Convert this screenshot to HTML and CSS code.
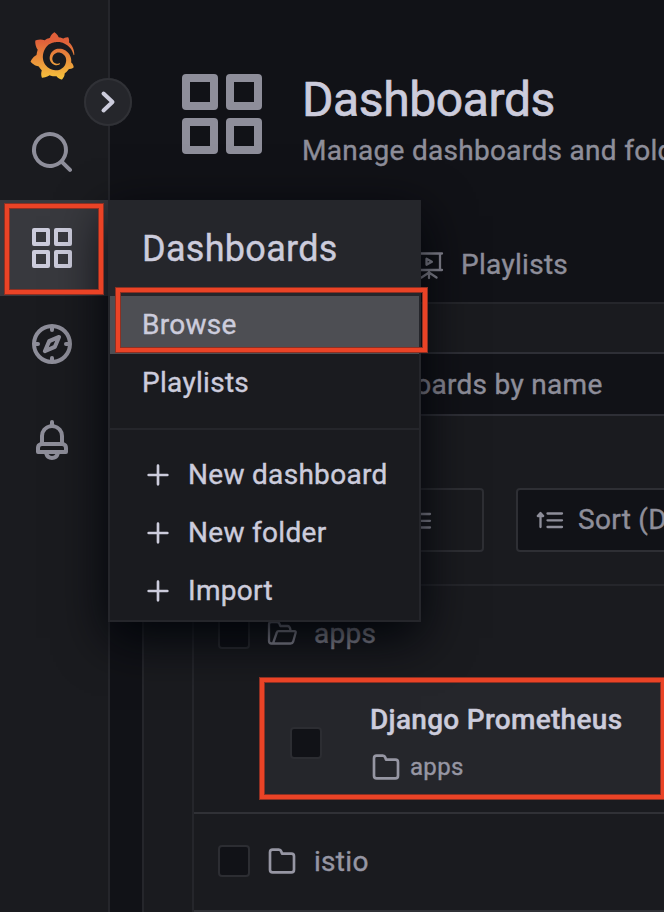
FILE: index.html
```html
<!DOCTYPE html>
<html lang="en">
<head>
<meta charset="utf-8">
<title>Dashboards</title>
<link rel="stylesheet" href="styles.css">
</head>
<body>
<svg class="defs" width="0" height="0">
  <symbol id="apps" viewBox="0 0 24 24"><path d="M10,13H3a1,1,0,0,0-1,1v7a1,1,0,0,0,1,1h7a1,1,0,0,0,1-1V14A1,1,0,0,0,10,13ZM9,20H4V15H9ZM21,2H14a1,1,0,0,0-1,1v7a1,1,0,0,0,1,1h7a1,1,0,0,0,1-1V3A1,1,0,0,0,21,2ZM20,9H15V4h5Zm1,4H14a1,1,0,0,0-1,1v7a1,1,0,0,0,1,1h7a1,1,0,0,0,1-1V14A1,1,0,0,0,21,13Zm-1,7H15V15h5ZM10,2H3A1,1,0,0,0,2,3v7a1,1,0,0,0,1,1h7a1,1,0,0,0,1-1V3A1,1,0,0,0,10,2ZM9,9H4V4H9Z"/></symbol>
  <symbol id="folder" viewBox="0 0 24 24"><path d="M19,5.5H12.72l-.32-1a3,3,0,0,0-2.84-2H5a3,3,0,0,0-3,3v13a3,3,0,0,0,3,3H19a3,3,0,0,0,3-3V8.500A3,3,0,0,0,19,5.500Zm1,13a1,1,0,0,1-1,1H5a1,1,0,0,1-1-1V5.500a1,1,0,0,1,1-1H9.560a1,1,0,0,1,.95.680l.54,1.640A1,1,0,0,0,12,7.500h7a1,1,0,0,1,1,1Z"/></symbol>
  <symbol id="plus" viewBox="0 0 24 24"><path d="M19,11H13V5a1,1,0,0,0-2,0v6H5a1,1,0,0,0,0,2h6v6a1,1,0,0,0,2,0V13h6a1,1,0,0,0,0-2Z"/></symbol>
</svg>
<div class="app">
  <nav class="sidebar">
    <a class="nav-item logo">
      <svg viewBox="6 0 340 367" width="45" height="48">
        <defs><linearGradient id="flame" gradientUnits="userSpaceOnUse" x1="175" y1="365" x2="175" y2="70"><stop offset="0" stop-color="#f5c43c"/><stop offset="1" stop-color="#e0603a"/></linearGradient></defs>
        <path fill="url(#flame)" d="M342,161.2c-0.6-6.1-1.6-13.1-3.6-20.9c-2-7.7-5-16.2-9.4-25c-4.4-8.8-10.1-17.9-17.5-26.8c-2.9-3.5-6.1-6.9-9.5-10.2c5.1-20.3-6.2-37.9-6.2-37.9c-19.5-1.2-31.9,6.1-36.5,9.4c-0.8-0.3-1.5-0.7-2.3-1c-3.3-1.3-6.7-2.6-10.3-3.7c-3.5-1.1-7.1-2.1-10.8-3c-3.7-0.9-7.4-1.6-11.2-2.2c-0.7-0.1-1.3-0.2-2-0.3c-8.5-27.2-32.9-38.6-32.9-38.6c-27.3,17.3-32.4,41.5-32.4,41.5s-0.1,0.5-0.3,1.4c-1.5,0.4-3,0.9-4.5,1.3c-2.1,0.6-4.2,1.4-6.2,2.2c-2.1,0.8-4.1,1.6-6.2,2.5c-4.1,1.8-8.2,3.8-12.2,6c-3.9,2.2-7.7,4.6-11.4,7.1c-0.5-0.2-1-0.4-1-0.4c-37.8-14.4-71.3,2.9-71.3,2.9c-3.1,40.2,15.1,65.5,18.7,70.1c-0.9,2.5-1.7,5-2.5,7.5c-2.8,9.1-4.9,18.4-6.2,28.1c-0.2,1.4-0.4,2.8-0.5,4.2C18.8,192.7,8.5,228,8.5,228c29.1,33.5,63.1,35.6,63.1,35.6c0,0,0.1-0.1,0.1-0.1c4.3,7.7,9.3,15,14.9,21.9c2.4,2.9,4.8,5.6,7.4,8.3c-10.6,30.4,1.5,55.6,1.5,55.6c32.4,1.2,53.7-14.2,58.2-17.7c3.2,1.1,6.5,2.1,9.8,2.9c10,2.6,20.2,4.1,30.4,4.5c2.5,0.1,5.1,0.2,7.6,0.1l1.2,0l0.8,0l1.6,0l1.6-0.1l0,0.1c15.3,21.8,42.1,24.9,42.1,24.9c19.1-20.1,20.2-40.1,20.2-44.4l0,0c0,0,0-0.1,0-0.3c0-0.4,0-0.6,0-0.6l0,0c0-0.3,0-0.6,0-0.9c4-2.8,7.8-5.8,11.4-9.1c7.6-6.9,14.3-14.8,19.9-23.3c0.5-0.8,1-1.6,1.5-2.4c21.6,1.2,36.9-13.4,36.9-13.4c-3.6-22.5-16.4-33.5-19.1-35.6l0,0c0,0-0.1-0.1-0.3-0.2c-0.2-0.1-0.2-0.2-0.2-0.2c0,0,0,0,0,0c-0.1-0.1-0.3-0.2-0.5-0.3c0.1-1.4,0.2-2.7,0.3-4.1c0.2-2.4,0.2-4.9,0.2-7.3l0-1.8l0-0.9l0-0.5c0-0.6,0-0.4,0-0.6l-0.1-1.5l-0.1-2c0-0.7-0.1-1.3-0.2-1.9c-0.1-0.6-0.1-1.3-0.2-1.9l-0.2-1.9l-0.3-1.9c-0.4-2.5-0.8-4.9-1.4-7.4c-2.3-9.7-6.1-18.9-11-27.2c-5-8.3-11.2-15.6-18.3-21.8c-7-6.2-14.9-11.2-23.1-14.9c-8.3-3.7-16.9-6.1-25.5-7.2c-4.3-0.6-8.6-0.8-12.9-0.7l-1.6,0l-0.4,0c-0.1,0-0.6,0-0.5,0l-0.7,0l-1.6,0.1c-0.6,0-1.2,0.1-1.7,0.1c-2.2,0.2-4.4,0.5-6.5,0.9c-8.6,1.6-16.7,4.7-23.8,9c-7.1,4.3-13.3,9.6-18.3,15.6c-5,6-8.9,12.7-11.6,19.6c-2.7,6.9-4.2,14.1-4.6,21c-0.1,1.7-0.1,3.5-0.1,5.2c0,0.4,0,0.9,0,1.3l0.1,1.4c0.1,0.8,0.1,1.7,0.2,2.5c0.3,3.5,1,6.9,1.9,10.1c1.9,6.5,4.9,12.4,8.6,17.4c3.7,5,8.2,9.1,12.9,12.4c4.7,3.2,9.8,5.5,14.8,7c5,1.5,10,2.1,14.7,2.1c0.6,0,1.2,0,1.7,0c0.3,0,0.6,0,0.9,0c0.3,0,0.6,0,0.9-0.1c0.5,0,1-0.1,1.5-0.1c0.1,0,0.3,0,0.4-0.1l0.5-0.1c0.3,0,0.6-0.1,0.9-0.1c0.6-0.1,1.1-0.2,1.7-0.3c0.6-0.1,1.1-0.2,1.6-0.4c1.1-0.2,2.1-0.6,3.1-0.9c2-0.7,4-1.5,5.7-2.4c1.8-0.9,3.4-2,5-3c0.4-0.3,0.9-0.6,1.3-1c1.6-1.3,1.9-3.7,0.6-5.3c-1.1-1.4-3.1-1.8-4.7-0.9c-0.4,0.2-0.8,0.4-1.2,0.6c-1.4,0.7-2.8,1.3-4.3,1.8c-1.5,0.5-3.1,0.9-4.7,1.2c-0.8,0.1-1.6,0.2-2.5,0.3c-0.4,0-0.8,0.1-1.3,0.1c-0.4,0-0.9,0-1.2,0c-0.4,0-0.8,0-1.2,0c-0.5,0-1,0-1.5-0.1c0,0-0.3,0-0.1,0l-0.2,0l-0.3,0c-0.2,0-0.5,0-0.7-0.1c-0.5-0.1-0.9-0.1-1.4-0.2c-3.7-0.5-7.4-1.6-10.9-3.2c-3.6-1.6-7-3.8-10.1-6.6c-3.1-2.8-5.8-6.1-7.9-9.9c-2.1-3.8-3.6-8-4.3-12.4c-0.3-2.2-0.5-4.5-0.4-6.7c0-0.6,0.1-1.2,0.1-1.8c0,0.2,0-0.1,0-0.1l0-0.2l0-0.5c0-0.3,0.1-0.6,0.1-0.9c0.1-1.2,0.3-2.4,0.5-3.6c1.7-9.6,6.5-19,13.9-26.1c1.9-1.8,3.9-3.4,6-4.9c2.1-1.5,4.4-2.8,6.8-3.9c2.4-1.1,4.8-2,7.4-2.7c2.5-0.7,5.1-1.1,7.8-1.4c1.3-0.1,2.6-0.2,4-0.2c0.4,0,0.6,0,0.9,0l1.1,0l0.7,0c0.3,0,0,0,0.1,0l0.3,0l1.1,0.1c2.9,0.2,5.7,0.6,8.5,1.3c5.6,1.2,11.1,3.3,16.2,6.1c10.2,5.7,18.9,14.5,24.2,25.1c2.7,5.3,4.6,11,5.5,16.9c0.2,1.5,0.4,3,0.5,4.5l0.1,1.1l0.1,1.1c0,0.4,0,0.8,0,1.1c0,0.4,0,0.8,0,1.1l0,1l0,1.1c0,0.7-0.1,1.9-0.1,2.6c-0.1,1.6-0.3,3.3-0.5,4.9c-0.2,1.6-0.5,3.2-0.8,4.8c-0.3,1.6-0.7,3.2-1.1,4.7c-0.8,3.1-1.8,6.2-3,9.3c-2.4,6-5.6,11.8-9.4,17.1c-7.7,10.6-18.2,19.2-30.2,24.7c-6,2.7-12.3,4.7-18.8,5.7c-3.2,0.6-6.5,0.9-9.8,1l-0.6,0l-0.5,0l-1.1,0l-1.6,0l-0.8,0c0.4,0-0.1,0-0.1,0l-0.3,0c-1.8,0-3.5-0.1-5.3-0.3c-7-0.5-13.9-1.8-20.7-3.7c-6.7-1.9-13.2-4.6-19.4-7.8c-12.3-6.6-23.4-15.6-32-26.5c-4.3-5.4-8.1-11.3-11.2-17.4c-3.1-6.1-5.6-12.6-7.4-19.1c-1.8-6.6-2.9-13.3-3.4-20.1l-0.1-1.3l0-0.3l0-0.3l0-0.6l0-1.1l0-0.3l0-0.4l0-0.8l0-1.6l0-0.3c0,0,0,0.1,0-0.1l0-0.6c0-0.8,0-1.7,0-2.5c0.1-3.3,0.4-6.8,0.8-10.2c0.4-3.4,1-6.9,1.7-10.3c0.7-3.4,1.5-6.8,2.5-10.2c1.9-6.7,4.3-13.2,7.1-19.3c5.7-12.2,13.1-23.1,22-31.8c2.2-2.2,4.5-4.2,6.9-6.2c2.4-1.9,4.9-3.7,7.5-5.4c2.5-1.7,5.2-3.2,7.9-4.6c1.3-0.7,2.7-1.4,4.1-2c0.7-0.3,1.4-0.6,2.1-0.9c0.7-0.3,1.4-0.6,2.1-0.9c2.8-1.2,5.7-2.2,8.7-3.1c0.7-0.2,1.5-0.4,2.2-0.7c0.7-0.2,1.5-0.4,2.2-0.6c1.5-0.4,3-0.8,4.5-1.1c0.7-0.2,1.5-0.3,2.3-0.5c0.8-0.2,1.5-0.3,2.3-0.5c0.8-0.1,1.5-0.3,2.3-0.4l1.1-0.2l1.2-0.2c0.8-0.1,1.5-0.2,2.3-0.3c0.9-0.1,1.7-0.2,2.6-0.3c0.7-0.1,1.9-0.2,2.6-0.3c0.5-0.1,1.1-0.1,1.6-0.2l1.1-0.1l0.5-0.1l0.6,0c0.9-0.1,1.7-0.1,2.6-0.2l1.3-0.1c0,0,0.5,0,0.1,0l0.3,0l0.6,0c0.7,0,1.5-0.1,2.2-0.1c2.9-0.1,5.9-0.1,8.8,0c5.8,0.2,11.5,0.9,17,1.9c11.1,2.1,21.5,5.6,31,10.3c9.5,4.6,17.9,10.3,25.3,16.5c0.5,0.4,0.9,0.8,1.4,1.2c0.4,0.4,0.9,0.8,1.3,1.2c0.9,0.8,1.7,1.6,2.6,2.4c0.9,0.8,1.7,1.6,2.5,2.4c0.8,0.8,1.6,1.6,2.4,2.5c3.1,3.3,6,6.6,8.6,10c5.2,6.7,9.4,13.5,12.7,19.9c0.2,0.4,0.4,0.8,0.6,1.2c0.2,0.4,0.4,0.8,0.6,1.2c0.4,0.8,0.8,1.6,1.1,2.4c0.4,0.8,0.7,1.5,1.1,2.3c0.3,0.8,0.7,1.5,1,2.3c1.2,3,2.4,5.9,3.3,8.6c1.5,4.4,2.6,8.3,3.5,11.7c0.3,1.4,1.6,2.3,3,2.1c1.5-0.1,2.6-1.3,2.6-2.8C342.6,170.4,342.5,166.1,342,161.2z"/>
      </svg>
    </a>
    <a class="nav-item"><svg class="icon" viewBox="0 0 24 24"><path d="M21.71,20.29,18,16.61A9,9,0,1,0,16.61,18l3.68,3.68a1,1,0,0,0,1.42,0A1,1,0,0,0,21.71,20.29ZM11,18a7,7,0,1,1,7-7A7,7,0,0,1,11,18Z"/></svg></a>
    <div class="nav-item active">
      <svg class="icon"><use href="#apps"/></svg>
      <div class="menu">
        <div class="menu-title">Dashboards</div>
        <div class="menu-item selected">Browse</div>
        <div class="menu-item">Playlists</div>
        <div class="menu-divider"></div>
        <div class="menu-item"><svg class="plus"><use href="#plus"/></svg>New dashboard</div>
        <div class="menu-item"><svg class="plus"><use href="#plus"/></svg>New folder</div>
        <div class="menu-item"><svg class="plus"><use href="#plus"/></svg>Import</div>
      </div>
    </div>
    <a class="nav-item"><svg class="icon" viewBox="0 0 24 24"><path d="M12,2A10,10,0,1,0,22,12,10,10,0,0,0,12,2Zm1,17.93V19a1,1,0,0,0-2,0v.93A8,8,0,0,1,4.07,13H5a1,1,0,0,0,0-2H4.07A8,8,0,0,1,11,4.07V5a1,1,0,0,0,2,0V4.07A8,8,0,0,1,19.93,11H19a1,1,0,0,0,0,2h.93A8,8,0,0,1,13,19.93ZM15.14,7.55l-5,2.12a1,1,0,0,0-.52.52l-2.12,5a1,1,0,0,0,.21,1.1,1,1,0,0,0,.7.3.93.93,0,0,0,.4-.09l5-2.12a1,1,0,0,0,.52-.52l2.12-5a1,1,0,0,0-1.310-1.310Zm-2.490,5.100-2.280,1,1-2.280,2.280-1Z"/></svg></a>
    <a class="nav-item"><svg class="icon" viewBox="0 0 24 24"><path d="M18,13.18V10a6,6,0,0,0-5-5.910V3a1,1,0,0,0-2,0V4.090A6,6,0,0,0,6,10v3.180A3,3,0,0,0,4,16v2a1,1,0,0,0,1,1H8.140a4,4,0,0,0,7.720,0H19a1,1,0,0,0,1-1V16A3,3,0,0,0,18,13.180ZM8,10a4,4,0,0,1,8,0v3H8Zm4,10a2,2,0,0,1-1.720-1h3.440A2,2,0,0,1,12,20Zm6-3H6V16a1,1,0,0,1,1-1H17a1,1,0,0,1,1,1Z"/></svg></a>
    <div class="toggle"><svg width="48" height="48" viewBox="0 0 48 48"><path d="M19.500 15.500 28.500 24 19.500 32.500" fill="none" stroke="#ccccdc" stroke-width="4" stroke-linecap="round" stroke-linejoin="round"/></svg></div>
  </nav>
  <main class="main">
    <header class="page-header">
      <svg class="header-icon"><use href="#apps"/></svg>
      <div class="headings">
        <h1>Dashboards</h1>
        <p>Manage dashboards and folders</p>
      </div>
    </header>
    <div class="tabs">
      <div class="tab">
        <svg class="tab-icon line" viewBox="0 0 32 32"><path d="M3 4.500H29M5 4.500V21M27 4.500V21M3 21H29M16 21V29M16 23.500 8.500 28.500M16 23.500 23.500 28.500M13.500 9.800V15.800L18.800 12.800Z"/></svg>
        Playlists
      </div>
    </div>
    <section class="panel">
      <div class="search"><span>Search dashboards by name</span></div>
      <div class="controls">
        <div class="view-toggle"><svg class="line" width="32" height="32" viewBox="0 0 32 32"><path d="M4 10H28M4 16.800H28M4 23.500H28"/></svg></div>
        <div class="sort">
          <svg class="line" width="32" height="32" viewBox="0 0 32 32"><path d="M13.500 9.500H28M13.500 16.300H28M13.500 23H28M6.500 10V23M3.800 12 6.500 9 9.200 12Z"/></svg>
          Sort (Default A–Z)
        </div>
      </div>
      <div class="list">
        <div class="folder-row open">
          <span class="checkbox"></span>
          <svg class="folder-icon line" viewBox="0 0 32 32"><path d="M7 26.500H5.500Q3 26.500 3 24V7.500Q3 5 5.500 5H10.500Q13 5 13.600 7.200L14.200 9H21.500Q24 9 24.500 13.500M7 26.500 10.800 15.500Q11.200 14.200 12.500 14.200H28.500Q30.200 14.200 29.600 16L27.200 24.500Q26.500 26.500 24.500 26.500H7"/></svg>
          <span class="folder-name">apps</span>
        </div>
        <div class="dashboard-card">
          <span class="checkbox"></span>
          <div class="card-text">
            <strong>Django Prometheus</strong>
            <div class="card-folder"><svg class="folder-icon"><use href="#folder"/></svg>apps</div>
          </div>
        </div>
        <div class="folder-row">
          <span class="checkbox"></span>
          <svg class="folder-icon"><use href="#folder"/></svg>
          <span class="folder-name">istio</span>
        </div>
      </div>
    </section>
  </main>
  <div class="mark mark-nav"></div>
  <div class="mark mark-browse"></div>
  <div class="mark mark-card"></div>
</div>
</body>
</html>
```
FILE: styles.css
```css
* { box-sizing: border-box; }

body {
  margin: 0;
  background: #111217;
  color: #ccccdc;
  font: 28px/44px Roboto, "Liberation Sans", sans-serif;
  letter-spacing: 0.3px;
  -webkit-text-stroke: 0.4px currentColor;
}

svg { display: block; flex: none; fill: currentColor; }
.defs { position: absolute; }
.line {
  fill: none;
  stroke: currentColor;
  stroke-width: 2.3px;
  stroke-linecap: round;
  stroke-linejoin: round;
}

.app {
  position: relative;
  display: flex;
  width: 664px;
  height: 912px;
  overflow: hidden;
}

.sidebar {
  position: relative;
  z-index: 2;
  flex: none;
  width: 110px;
  padding-top: 8px;
  background: #1a1b1f;
  border-right: 2px solid #25262b;
}

.nav-item {
  position: relative;
  z-index: 0;
  display: flex;
  align-items: center;
  height: 96px;
  padding-left: 28px;
  color: #8e8e9a;
}
.nav-item.logo { padding-left: 30px; }
.icon { width: 48px; height: 48px; }
.nav-item.active { z-index: 1; background: #38393e; color: #ccccdc; }

.toggle {
  position: absolute;
  z-index: 2;
  top: 78px;
  left: 84px;
  width: 48px;
  height: 48px;
  border-radius: 50%;
  background: #25262b;
  box-shadow: inset 0 0 0 2px #303136;
}

.menu {
  position: absolute;
  top: 0;
  left: 108px;
  width: 313px;
  height: 422px;
  border: 2px solid #25262b;
  border-top: 0;
  background: #1a1b1f;
  box-shadow: 0 16px 48px #010409;
  white-space: nowrap;
}
.menu-title {
  height: 96px;
  padding: 1px 0 0 32px;
  background: #25262b;
  font-size: 36px;
  line-height: 96px;
}
.menu-item {
  display: flex;
  align-items: center;
  height: 58px;
  padding-left: 32px;
}
.menu-item.selected { background: #4d4e53; }
.menu-divider { height: 2px; margin: 16px 0; background: #25262b; }
.plus { width: 32px; height: 32px; margin-right: 14px; }

.main {
  display: flex;
  flex-direction: column;
  flex: 1;
  min-width: 0;
  overflow: hidden;
  padding-left: 32px;
  white-space: nowrap;
}

.page-header { display: flex; flex: none; height: 226px; padding: 66px 0 0 32px; }
.header-icon { width: 96px; height: 96px; color: #8e8e9a; }
.headings { padding: 6px 0 0 32px; }
h1 {
  margin: 0;
  font-size: 48px;
  font-weight: 400;
  line-height: 56px;
  letter-spacing: -0.4px;
  -webkit-text-stroke-width: 0.7px;
}
p { margin: 1px 0 0; color: #8e8e9a; }

.tabs { flex: none; height: 76px; padding-left: 271px; color: #8e8e9a; }
.tab { display: flex; align-items: center; gap: 16px; height: 76px; padding-top: 1px; }
.tab-icon { width: 32px; height: 32px; }

.panel {
  flex: 1;
  width: 700px;
  padding: 48px 0 0 48px;
  background: #1a1b1f;
  border-top: 2px solid #25262b;
  border-left: 2px solid #25262b;
}
.search {
  height: 64px;
  padding: 1px 0 0 48px;
  background: #111217;
  border: 2px solid #2e2f36;
  color: #8e8e9a;
  line-height: 60px;
}
.controls { display: flex; gap: 32px; margin-top: 72px; color: #8e8e9a; }
.view-toggle, .sort {
  display: flex;
  align-items: center;
  height: 64px;
  border: 2px solid #2e2f34;
  border-radius: 4px;
}
.view-toggle { justify-content: flex-end; width: 292px; padding-right: 48px; }
.sort {
  gap: 12px;
  width: 320px;
  padding-left: 16px;
  background: #111217;
}

.list {
  height: 400px;
  margin-top: 32px;
  border: 2px solid #25262b;
}
.folder-row {
  display: flex;
  align-items: center;
  height: 100px;
  padding: 0 0 2px 24px;
  border: solid #303136;
  border-width: 2px 0;
  color: #9696a3;
}
.folder-row.open { height: 92px; padding: 2px 0 0 24px; border: 0; }
.folder-name { padding-top: 2px; }
.checkbox {
  flex: none;
  width: 32px;
  height: 32px;
  background: #111217;
  border: 2px solid #2c2d32;
  border-radius: 4px;
}
.folder-icon { width: 32px; height: 32px; margin: 0 16px; }
.dashboard-card {
  display: flex;
  align-items: center;
  height: 120px;
  margin: 0 0 14px 68px;
  padding: 10px 0 0 28px;
  background: #25262b;
}
.card-text { display: flex; flex-direction: column; gap: 3px; margin-left: 48px; }
strong { font-weight: 500; }
.card-folder {
  display: flex;
  align-items: center;
  color: #9696a3;
  font-size: 24px;
}
.card-folder .folder-icon { margin: 0 8px 0 0; }

.mark {
  position: absolute;
  z-index: 3;
  border: 4px solid #ea4326;
  box-shadow: 0 0 0 1px #8d3023, inset 0 0 0 1px #8d3023;
}
.mark-nav { left: 5px; top: 204px; width: 98px; height: 90px; }
.mark-browse { left: 116px; top: 288px; width: 311px; height: 64px; }
.mark-card { left: 260px; top: 678px; width: 405px; height: 121px; }
```
